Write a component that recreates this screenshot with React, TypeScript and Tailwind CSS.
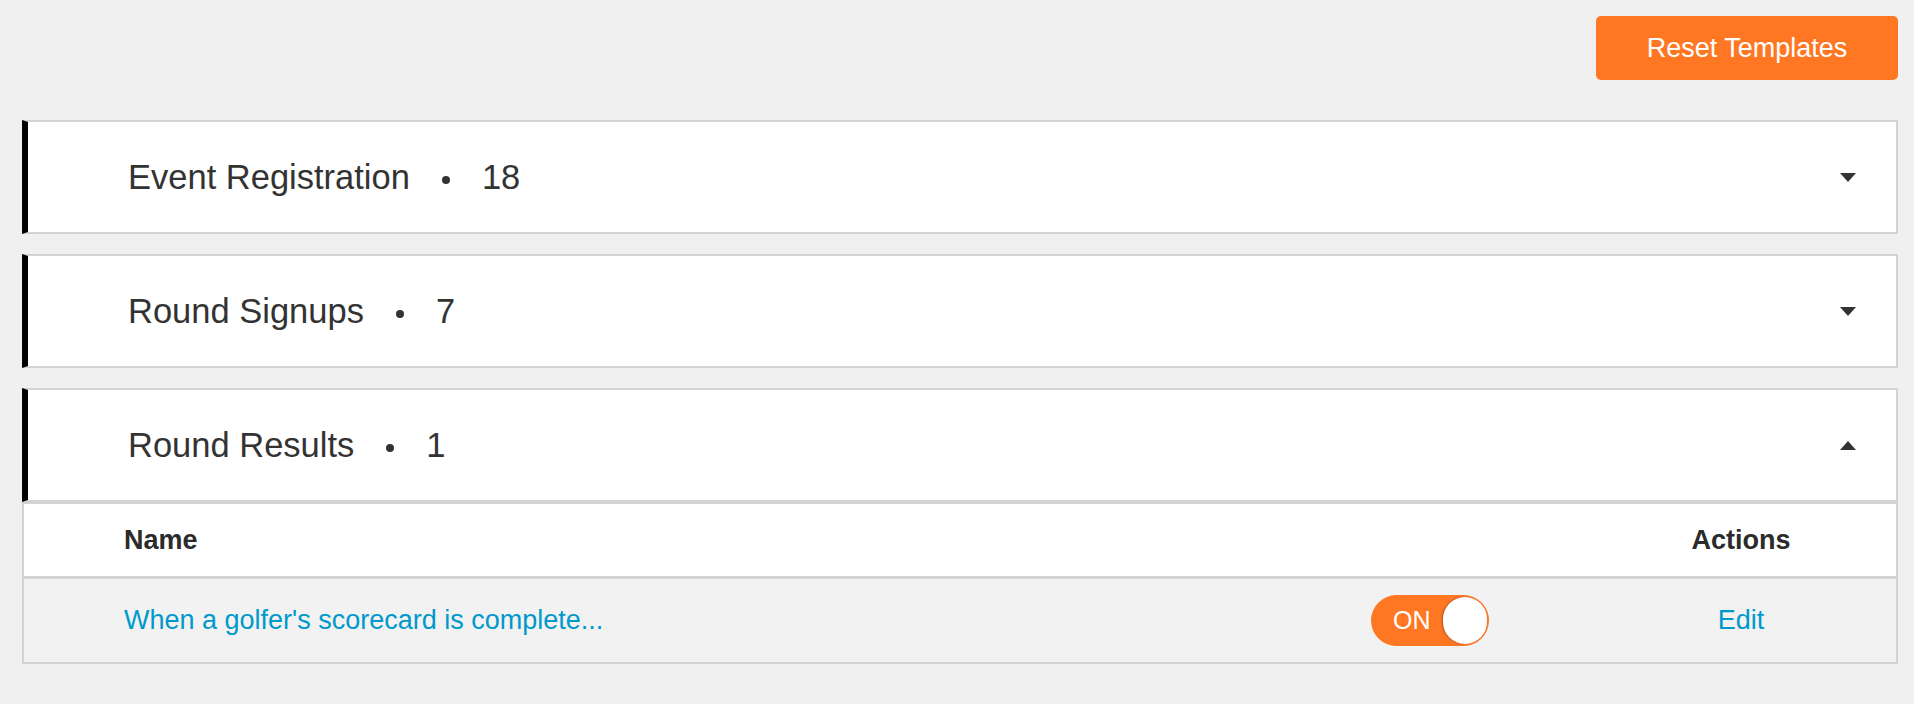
type Template = {
  id: number;
  name: string;
  enabled: boolean;
}

type Section = {
  title: string;
  count: number;
  open: boolean;
  templates: Template[];
}

const sections: Section[] = [
  { title: 'Event Registration', count: 18, open: false, templates: [] },
  { title: 'Round Signups', count: 7, open: false, templates: [] },
  {
    title: 'Round Results',
    count: 1,
    open: true,
    templates: [{ id: 1, name: "When a golfer's scorecard is complete...", enabled: true }]
  }
];

const Caret = ({ up }: { up: boolean }) => (
  <svg width="16" height="9" viewBox="0 0 16 9" className="shrink-0">
    {up ? <polygon points="0,9 16,9 8,0" fill="#333333" /> : <polygon points="0,0 16,0 8,9" fill="#333333" />}
  </svg>
)

const Toggle = ({ on }: { on: boolean }) => (
  <div className={`relative flex items-center w-[118px] h-[51px] rounded-full ${on ? 'bg-[#ff7722]' : 'bg-gray-300'}`}>
    <span className="pl-[22px] text-[25px] leading-none text-white">{on ? 'ON' : 'OFF'}</span>
    <div className="absolute right-[2px] top-[2px] w-[44px] h-[47px] rounded-full bg-white shadow-[-1px_0_2px_rgba(0,0,0,0.3)]" />
  </div>
)

const SectionPanel = ({ section }: { section: Section }) => (
  <div>
    {/* HEADER */}
    <div className="flex items-center justify-between h-[114px] bg-white border-2 border-[#d3d3d3] border-l-[6px] border-l-black pl-[100px] pr-[40px]">
      <div className="text-[34.5px] text-[#333333] leading-none">
        {section.title}
        <span className="inline-block align-middle w-2 h-2 rounded-full bg-[#333333] mx-8" />
        {section.count}
      </div>
      <Caret up={section.open} />
    </div>

    {/* TEMPLATE TABLE */}
    {section.open && (
      <div className="border-2 border-t-0 border-[#d3d3d3]">
        <div className="flex items-center h-[77px] bg-white border-t-2 border-b-[3px] border-[#d3d3d3] pl-[100px] text-[27px] font-bold text-[#2b2b2b]">
          <div className="flex-1">Name</div>
          <div className="w-[312px]" />
          <div className="w-[310px] text-center">Actions</div>
        </div>
        {section.templates.map((t) => (
          <div key={t.id} className="flex items-center h-[83px] bg-[#f2f2f2] pl-[100px] text-[27px] text-[#0099cc]">
            <div className="flex-1">{t.name}</div>
            <div className="w-[312px] flex justify-center">
              <Toggle on={t.enabled} />
            </div>
            <div className="w-[310px] text-center">Edit</div>
          </div>
        ))}
      </div>
    )}
  </div>
)

export default function App() {
  return (
    <div className="min-h-screen bg-[#f0f0f0] pt-4 pl-[22px] pr-4 font-['Liberation_Sans',Arial,sans-serif]">
      <div className="flex justify-end">
        <button className="w-[302px] h-[64px] rounded-[5px] bg-[#ff7722] text-white text-[27px]">
          Reset Templates
        </button>
      </div>

      <div className="mt-10 flex flex-col gap-5">
        {sections.map((s) => (
          <SectionPanel key={s.title} section={s} />
        ))}
      </div>
    </div>
  )
}
